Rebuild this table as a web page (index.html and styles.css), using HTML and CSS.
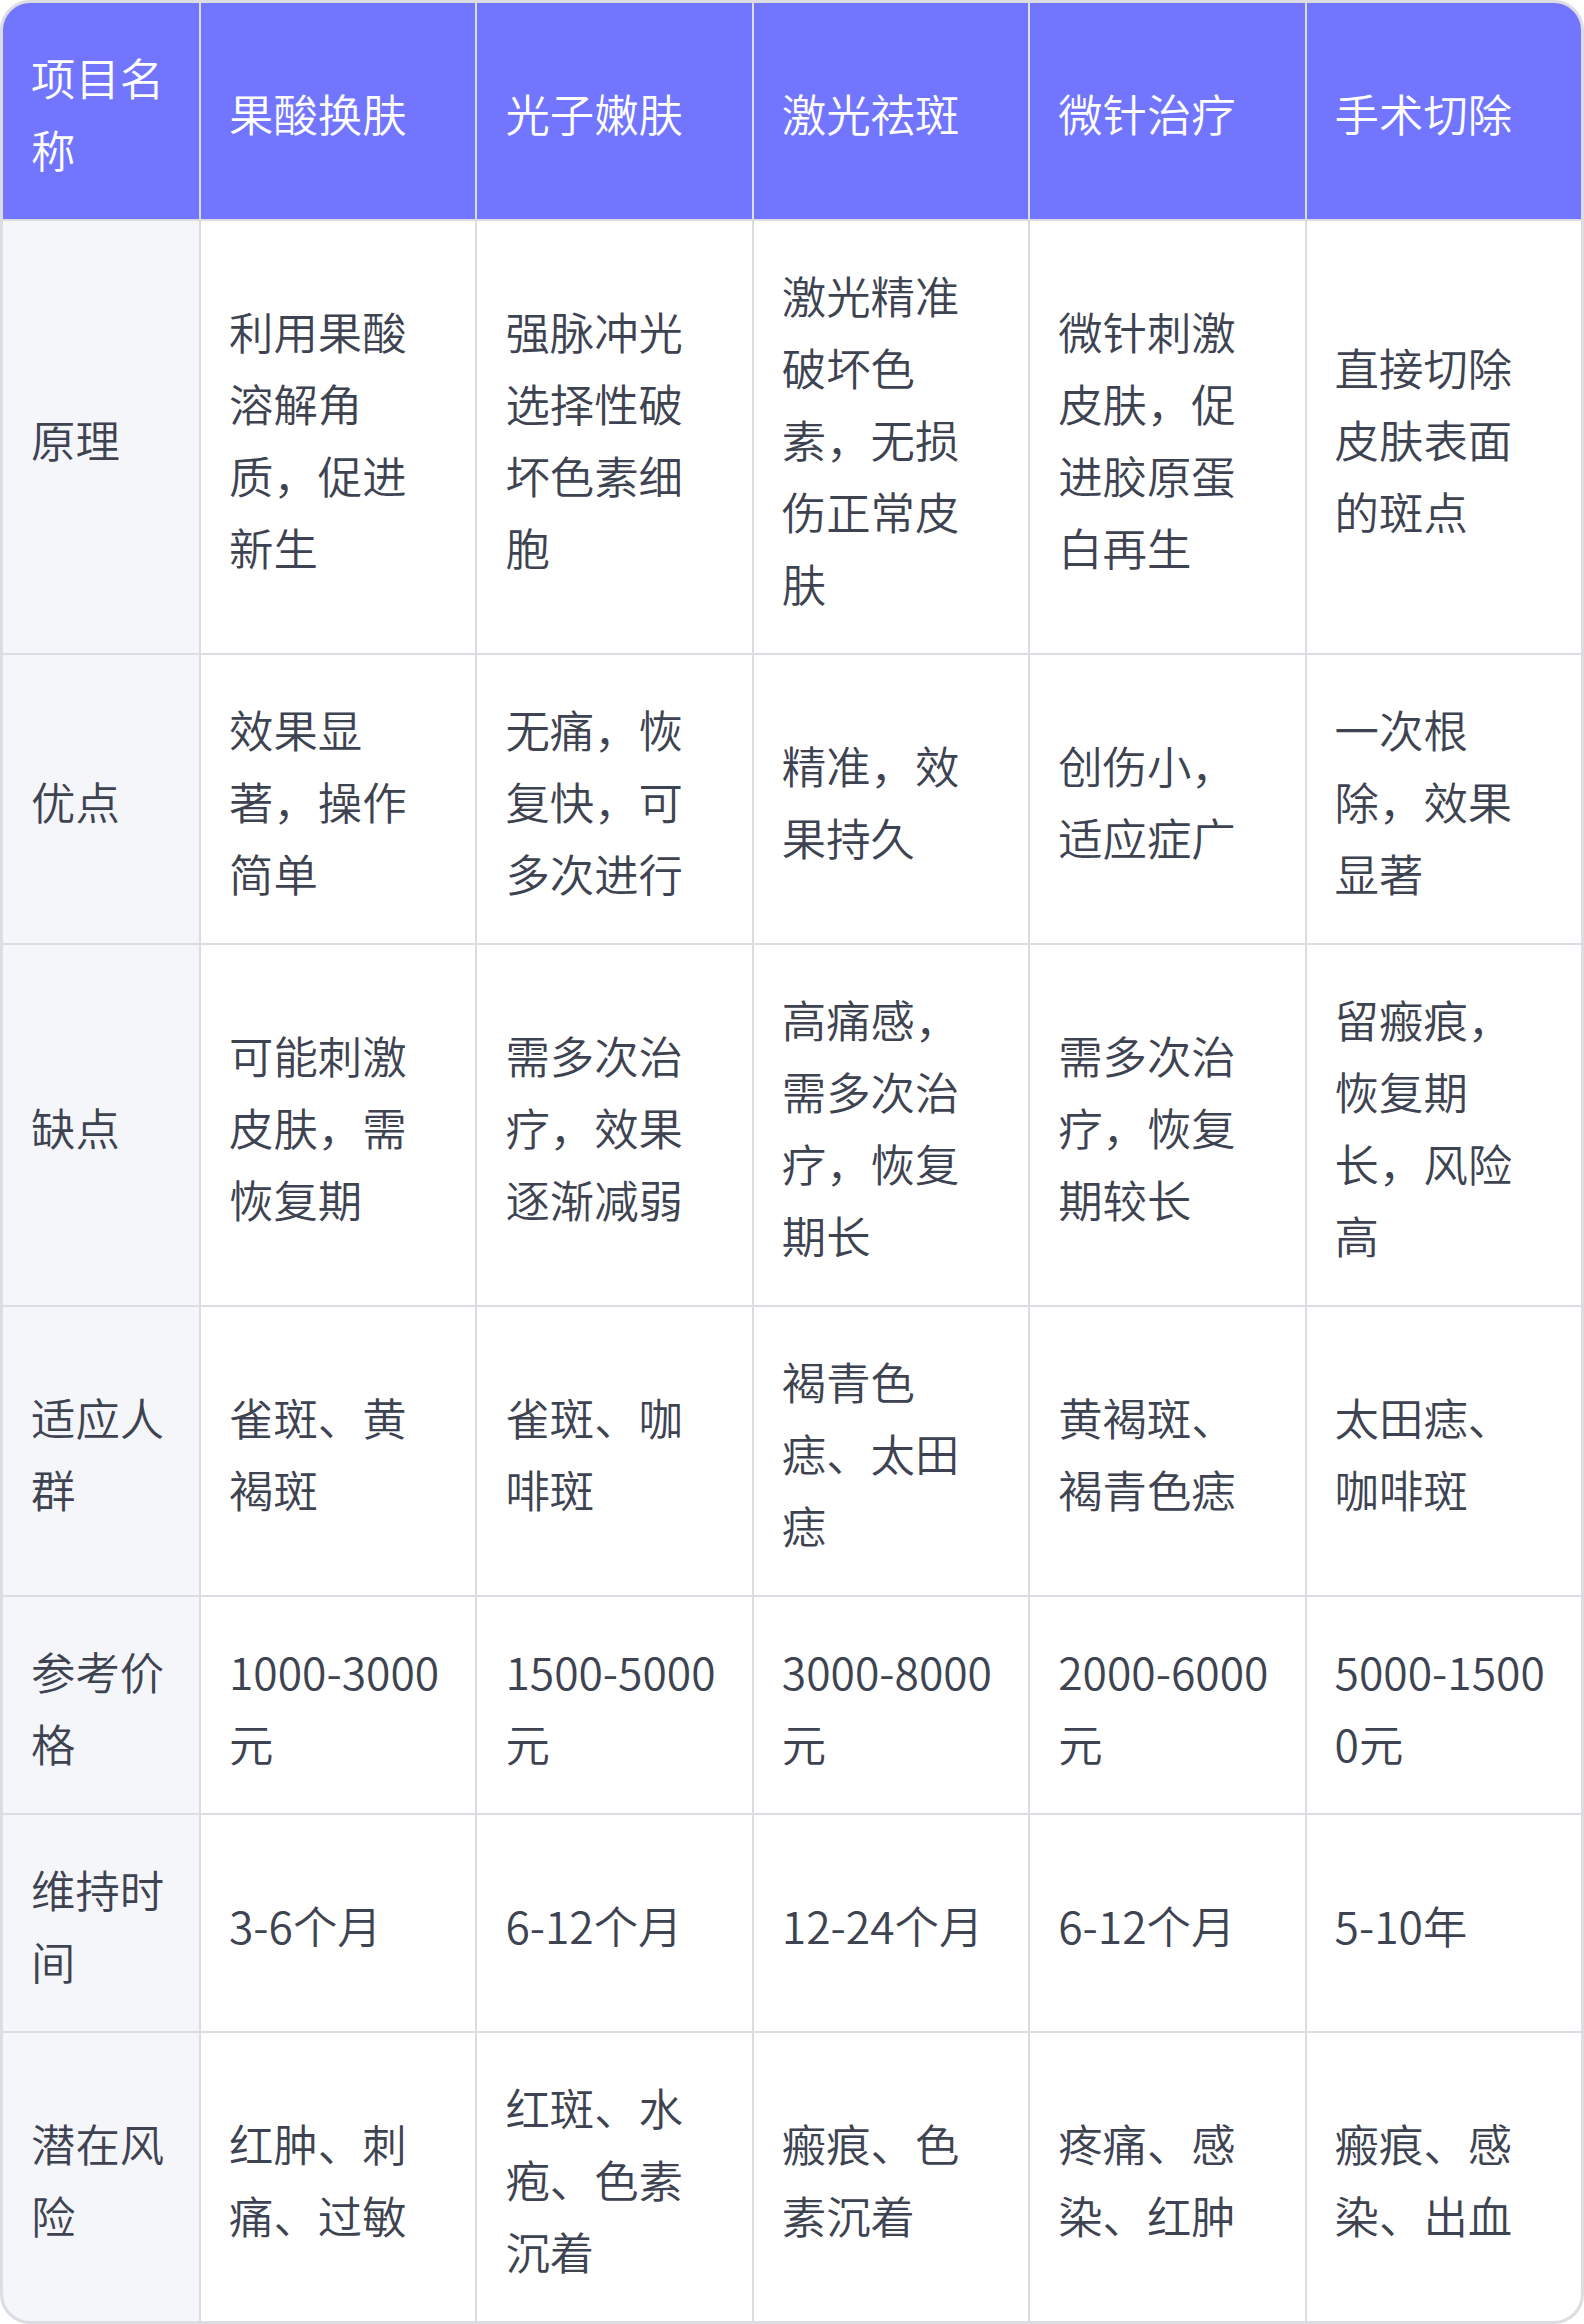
FILE: index.html
```html
<!DOCTYPE html>
<html lang="zh-CN">
<head>
<meta charset="utf-8">
<title>祛斑项目对比</title>
<link rel="stylesheet" href="styles.css">
</head>
<body>
<div class="table">
  <div class="cell head">项目名称</div>
  <div class="cell head">果酸换肤</div>
  <div class="cell head">光子嫩肤</div>
  <div class="cell head">激光祛斑</div>
  <div class="cell head">微针治疗</div>
  <div class="cell head">手术切除</div>

  <div class="cell label">原理</div>
  <div class="cell">利用果酸溶解角质，促进新生</div>
  <div class="cell">强脉冲光选择性破坏色素细胞</div>
  <div class="cell">激光精准破坏色素，无损伤正常皮肤</div>
  <div class="cell">微针刺激皮肤，促进胶原蛋白再生</div>
  <div class="cell">直接切除皮肤表面的斑点</div>

  <div class="cell label">优点</div>
  <div class="cell">效果显著，操作简单</div>
  <div class="cell">无痛，恢复快，可多次进行</div>
  <div class="cell">精准，效果持久</div>
  <div class="cell">创伤小，适应症广</div>
  <div class="cell">一次根除，效果显著</div>

  <div class="cell label">缺点</div>
  <div class="cell">可能刺激皮肤，需恢复期</div>
  <div class="cell">需多次治疗，效果逐渐减弱</div>
  <div class="cell">高痛感，需多次治疗，恢复期长</div>
  <div class="cell">需多次治疗，恢复期较长</div>
  <div class="cell">留瘢痕，恢复期长，风险高</div>

  <div class="cell label">适应人群</div>
  <div class="cell">雀斑、黄褐斑</div>
  <div class="cell">雀斑、咖啡斑</div>
  <div class="cell">褐青色痣、太田痣</div>
  <div class="cell">黄褐斑、褐青色痣</div>
  <div class="cell">太田痣、咖啡斑</div>

  <div class="cell label">参考价格</div>
  <div class="cell">1000-3000元</div>
  <div class="cell">1500-5000元</div>
  <div class="cell">3000-8000元</div>
  <div class="cell">2000-6000元</div>
  <div class="cell">5000-15000元</div>

  <div class="cell label">维持时间</div>
  <div class="cell">3-6个月</div>
  <div class="cell">6-12个月</div>
  <div class="cell">12-24个月</div>
  <div class="cell">6-12个月</div>
  <div class="cell">5-10年</div>

  <div class="cell label">潜在风险</div>
  <div class="cell">红肿、刺痛、过敏</div>
  <div class="cell">红斑、水疱、色素沉着</div>
  <div class="cell">瘢痕、色素沉着</div>
  <div class="cell">疼痛、感染、红肿</div>
  <div class="cell">瘢痕、感染、出血</div>
</div>
</body>
</html>
```

FILE: styles.css
```css
html, body {
  margin: 0;
  padding: 0;
  background: #ffffff;
}

.table {
  box-sizing: border-box;
  width: 1584px;
  display: grid;
  grid-template-columns: 196px repeat(5, 1fr);
  gap: 2px;
  background: #dcdde2;
  border: 3px solid #dcdde2;
  border-radius: 30px;
  overflow: hidden;
  font-family: "Noto Sans CJK SC", "Noto Sans", sans-serif;
  font-weight: 350;
  font-size: 44.4px;
  line-height: 72px;
  color: #3e4351;
}

.cell {
  display: flex;
  align-items: center;
  padding: 38px 28px 34px;
  background: #ffffff;
  word-break: break-all;
  min-width: 0;
}

.head {
  background: #7276ff;
  color: #ffffff;
}

.label {
  background: #f5f6fa;
}
```
